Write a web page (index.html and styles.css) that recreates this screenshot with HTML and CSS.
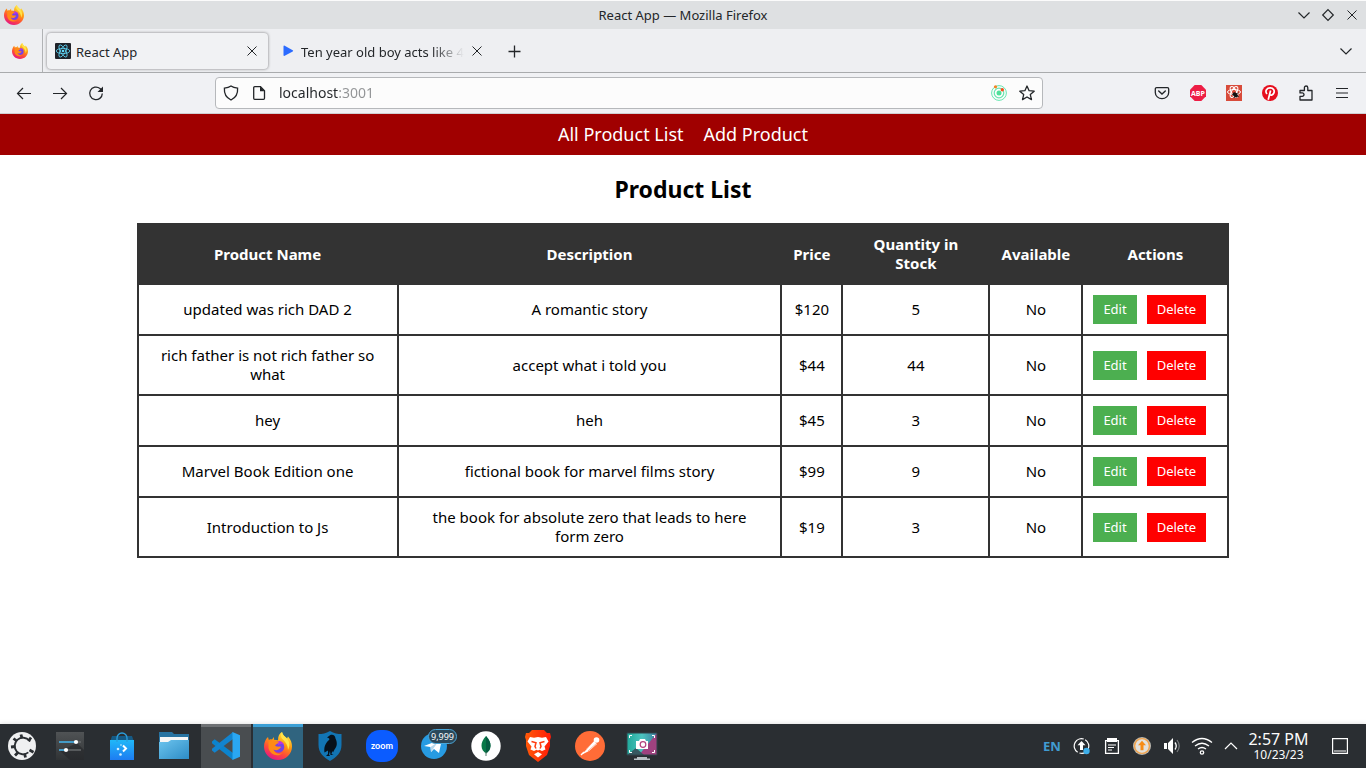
FILE: index.html
```html
<!DOCTYPE html>
<html lang="en">
<head>
<meta charset="utf-8">
<title>React App</title>
<link rel="stylesheet" href="styles.css">
</head>
<body>
<svg class="defs" aria-hidden="true">
  <defs>
    <linearGradient id="fox" x1="0.8" y1="0" x2="0.3" y2="1"><stop offset="0" stop-color="#fff44f"/><stop offset="0.4" stop-color="#ff980e"/><stop offset="0.7" stop-color="#ff4a3a"/><stop offset="1" stop-color="#e31587"/></linearGradient>
    <linearGradient id="bag" x1="0" y1="0" x2="0" y2="1"><stop offset="0" stop-color="#20b8f8"/><stop offset="1" stop-color="#1d7cf2"/></linearGradient>
    <linearGradient id="folder" x1="0" y1="0" x2="1" y2="1"><stop offset="0" stop-color="#6cc4ee"/><stop offset="1" stop-color="#2d8cc6"/></linearGradient>
    <linearGradient id="lion" x1="0" y1="0" x2="1" y2="0"><stop offset="0" stop-color="#ff5a08"/><stop offset="1" stop-color="#ff1b08"/></linearGradient>
    <linearGradient id="slate" x1="0" y1="0" x2="0" y2="1"><stop offset="0" stop-color="#505355"/><stop offset="1" stop-color="#303335"/></linearGradient>
    <linearGradient id="screen" x1="0" y1="0" x2="1" y2="0"><stop offset="0" stop-color="#20a99a"/><stop offset="0.5" stop-color="#4cc4c0"/><stop offset="1" stop-color="#3b7d9e"/></linearGradient>
    <symbol id="firefox" viewBox="0 0 28 28">
      <path fill="url(#fox)" d="M14 28C6 28 0 22 0 14.500C0 11 1.500 7 4 5l.8 3c1-.8 2-.8 3.200-.5L10 5v2.800l4 .4C14 4 15.500 1.500 18 0c.5 3 3 4.500 5 6.500l1-2C27 8 28 11 28 14.500C28 22 22 28 14 28z"/>
      <circle cx="14.500" cy="15" r="5.800" fill="#7542e5"/>
      <path fill="#b833e1" d="M12 9.500c4-1.500 7 .5 8 3-2-1-4-.5-5.500.5z"/>
      <path fill="#ff8a16" d="M4.500 9.500C8 7.500 11 9 15 9.500c-.5 2-3 2.500-4 4 2 2 4.500.5 6 1.500-1.500 3-5 4-7.500 2.500 1 4 6 5 9 3.500-5 5-13 1-14-5z"/>
      <path fill="#ffe34a" d="M18 0c.5 3 3 4.500 5 6.500C26 10 26 14 24 18c0-4-2-8-5-10.500-2.500-2-2.500-5-1-7.500z"/>
    </symbol>
    <symbol id="close" viewBox="0 0 16 16"><path d="M3.500 3.500l9 9M12.500 3.500l-9 9" fill="none" stroke="currentColor" stroke-width="1"/></symbol>
    <symbol id="chevron" viewBox="0 0 16 16"><path d="M2.500 5.500L8 11l5.500-5.500" fill="none" stroke="currentColor" stroke-width="1.200"/></symbol>
  </defs>
</svg>

<div class="desktop">
  <header class="titlebar">
    <svg class="i20"><use href="#firefox"/></svg>
    <span class="window-title">React App — Mozilla Firefox</span>
    <div class="window-buttons">
      <button aria-label="Minimize"><svg class="i16"><use href="#chevron"/></svg></button>
      <button aria-label="Maximize"><svg class="i16" viewBox="0 0 16 16"><path d="M8 2.700L13.300 8 8 13.300 2.700 8z" fill="none" stroke="currentColor" stroke-width="1.200"/></svg></button>
      <button aria-label="Close window"><svg class="i16"><use href="#close"/></svg></button>
    </div>
  </header>

  <div class="tabstrip">
    <button class="pinned" aria-label="Firefox View"><svg class="i16"><use href="#firefox"/></svg></button>
    <div class="tab active">
      <svg class="i16" viewBox="0 0 16 16"><rect width="16" height="16" rx="1" fill="#20232a"/><g fill="none" stroke="#61dafb" stroke-width=".8"><ellipse cx="8" cy="8" rx="6.800" ry="2.600"/><ellipse cx="8" cy="8" rx="6.800" ry="2.600" transform="rotate(60 8 8)"/><ellipse cx="8" cy="8" rx="6.800" ry="2.600" transform="rotate(120 8 8)"/></g><circle cx="8" cy="8" r="1.300" fill="#61dafb"/></svg>
      <span class="tab-title">React App</span>
      <button aria-label="Close tab"><svg class="i16"><use href="#close"/></svg></button>
    </div>
    <div class="tab second">
      <svg class="i16" viewBox="0 0 16 16"><path d="M3.500 3.500q0-1.200 1.200-.8l8 4.500q1 .6 0 1.200l-8 4.400q-1.200.4-1.200-.8z" fill="#2b6bff"/></svg>
      <span class="tab-title fade">Ten year old boy acts like 4</span>
      <button aria-label="Close tab"><svg class="i16"><use href="#close"/></svg></button>
    </div>
    <button class="newtab" aria-label="New tab"><svg class="i16" viewBox="0 0 16 16"><path d="M8.500 2.500v12M2.500 8.500h12" stroke="currentColor" stroke-width="1.300"/></svg></button>
    <button class="alltabs" aria-label="List all tabs"><svg class="i16"><use href="#chevron"/></svg></button>
  </div>

  <div class="toolbar">
    <button aria-label="Back"><svg class="i16" viewBox="0 0 16 16"><path d="M15 8.500H1.500M7 3L1.500 8.500 7 14" fill="none" stroke="currentColor" stroke-width="1.200"/></svg></button>
    <button aria-label="Forward"><svg class="i16" viewBox="0 0 16 16"><path d="M1 8.500h13.500M9 3l5.500 5.500L9 14" fill="none" stroke="currentColor" stroke-width="1.200"/></svg></button>
    <button aria-label="Reload"><svg class="i16" viewBox="0 0 16 16"><path d="M14.300 8.500A6.300 6.300 0 1 1 12 3.500l1.500 1.500" fill="none" stroke="currentColor" stroke-width="1.300"/><path d="M15 1.500v5.500H9.500z" fill="currentColor"/></svg></button>
    <div class="urlbar">
      <svg class="i16" viewBox="0 0 16 16"><path d="M8 1C6 2.500 3.500 3 1.400 3.200 1 8.500 3 12.500 8 15c5-2.500 7-6.500 6.600-11.800C12.500 3 10 2.500 8 1z" fill="none" stroke="currentColor" stroke-width="1.300"/></svg>
      <svg class="i16" viewBox="0 0 16 16"><path d="M3.700 1.700h5.800l4 4v7.600a1 1 0 0 1-1 1H3.700a1 1 0 0 1-1-1V2.700a1 1 0 0 1 1-1z" fill="none" stroke="currentColor" stroke-width="1.300"/><path d="M9 1.500v4.700h4.700z" fill="currentColor"/></svg>
      <input type="text" aria-label="Address" value="localhost:3001">
      <svg class="i16" viewBox="0 0 16 16"><g fill="none" stroke="#66e6b0"><circle cx="8" cy="8" r="7.400" stroke-width="1"/><circle cx="8" cy="8" r="4.800" stroke-width="1.200"/></g><circle cx="8" cy="8" r="2.500" fill="#4fe09a"/><circle cx="4.500" cy="1.800" r="1.600" fill="#f58220"/><circle cx="11.300" cy="4.800" r="1.700" fill="#f4511e"/></svg>
      <svg class="i16" viewBox="0 0 16 16"><path d="M8 1l2.100 4.700 5.100.5-3.900 3.400 1.200 5L8 12l-4.500 2.600 1.200-5L.8 6.200l5.100-.5z" fill="none" stroke="currentColor" stroke-width="1.300" stroke-linejoin="round"/></svg>
    </div>
    <button aria-label="Save to Pocket"><svg class="i16" viewBox="0 0 16 16"><path d="M2.600 2.600h10.800a1.300 1.300 0 0 1 1.300 1.300V7.500a6.700 6.200 0 0 1-13.400 0V3.900a1.300 1.300 0 0 1 1.300-1.300z" fill="none" stroke="currentColor" stroke-width="1.300"/><path d="M4.700 6L8 9l3.300-3" fill="none" stroke="currentColor" stroke-width="1.400" stroke-linecap="round"/></svg></button>
    <button aria-label="Adblock Plus"><svg class="i16" viewBox="0 0 16 16"><path d="M4.700 0h6.600L16 4.700v6.600L11.300 16H4.700L0 11.300V4.700z" fill="#ed1e45"/><text x="8" y="11" text-anchor="middle" class="abp">ABP</text></svg></button>
    <button aria-label="React bug tools"><svg class="i16" viewBox="0 0 16 16"><rect width="16" height="16" fill="#d84b3a"/><g fill="none" stroke="#fff" stroke-width="1"><ellipse cx="8" cy="7" rx="6.500" ry="2.500"/><ellipse cx="8" cy="7" rx="6" ry="2.500" transform="rotate(60 8 7)"/><ellipse cx="8" cy="7" rx="6" ry="2.500" transform="rotate(120 8 7)"/></g><ellipse cx="9.300" cy="9.800" rx="3" ry="1.900" fill="#111" transform="rotate(45 9.300 9.800)"/><path d="M6 9.500l3 .5M8 13l1.500-3M12.500 8L9 9M13 11.500L9 10" stroke="#111" stroke-width=".8"/></svg></button>
    <button aria-label="Pinterest"><svg class="i16" viewBox="0 0 16 16"><circle cx="8" cy="8" r="8" fill="#e60f1e"/><path d="M5 9C2.500 6 5 2.800 8.300 2.900c3 .1 4.600 2.400 3.600 5-1 2.600-3.500 2.700-4.300 1.500M8.600 5.500L6.200 14.800" fill="none" stroke="#fff" stroke-width="1.700"/></svg></button>
    <button aria-label="Extensions"><svg class="i16" viewBox="0 0 16 16"><path d="M2 15v-3.700h2.300a1.700 1.700 0 0 0 0-3.400H2V5.500h4.400V2.700a1.700 1.700 0 0 1 3.400 0v2.800H14V15z" fill="none" stroke="currentColor" stroke-width="1.300" stroke-linejoin="round"/></svg></button>
    <button aria-label="Open application menu"><svg class="i16" viewBox="0 0 16 16"><path d="M2 3.500h12M2 8h12M2 12.500h12" stroke="currentColor" stroke-width="1.200"/></svg></button>
  </div>

  <main class="page">
    <nav class="site-nav">
      <a href="#list">All Product List</a>
      <a href="#add">Add Product</a>
    </nav>
    <h2 class="page-title">Product List</h2>
    <table class="products" id="list">
      <colgroup><col class="c-name"><col><col class="c-price"><col class="c-qty"><col class="c-avail"><col class="c-act"></colgroup>
      <thead>
        <tr><th>Product Name</th><th>Description</th><th>Price</th><th>Quantity in Stock</th><th>Available</th><th>Actions</th></tr>
      </thead>
      <tbody>
        <tr><td>updated was rich DAD 2</td><td>A romantic story</td><td>$120</td><td>5</td><td>No</td><td><div class="actions"><button class="edit">Edit</button><button class="delete">Delete</button></div></td></tr>
        <tr><td>rich father is not rich father so what</td><td>accept what i told you</td><td>$44</td><td>44</td><td>No</td><td><div class="actions"><button class="edit">Edit</button><button class="delete">Delete</button></div></td></tr>
        <tr><td>hey</td><td>heh</td><td>$45</td><td>3</td><td>No</td><td><div class="actions"><button class="edit">Edit</button><button class="delete">Delete</button></div></td></tr>
        <tr><td>Marvel Book Edition one</td><td>fictional book for marvel films story</td><td>$99</td><td>9</td><td>No</td><td><div class="actions"><button class="edit">Edit</button><button class="delete">Delete</button></div></td></tr>
        <tr><td>Introduction to Js</td><td>the book for absolute zero that leads to here form&nbsp;zero</td><td>$19</td><td>3</td><td>No</td><td><div class="actions"><button class="edit">Edit</button><button class="delete">Delete</button></div></td></tr>
      </tbody>
    </table>
  </main>

  <footer class="taskbar">
    <button class="launcher" aria-label="Application launcher"><svg class="i28" viewBox="0 0 28 28"><circle cx="14" cy="14" r="14" fill="#eff0f1"/><circle cx="15" cy="14" r="8.300" fill="none" stroke="#2a2e32" stroke-width="1.800" stroke-dasharray="40 12.200" transform="rotate(50 15 14)"/><g stroke="#2a2e32" stroke-width="2.800"><path d="M14 6.500L13 2.500M8.800 9L5.500 6.500M7.500 14.500L3 15M10 20.500l-3 3M16.500 21.500l1 4M21.500 18l4 2.200M20.500 9l2.500-3.500"/></g></svg></button>
    <button aria-label="System settings"><svg class="i28" viewBox="0 0 28 28"><path d="M0 0h28v28H0z" fill="url(#slate)"/><path d="M21 11l7 7v10H14L4 19z" fill="#242729" opacity=".6"/><path d="M3 10h22M3 18h22" stroke="#66696b" stroke-width="1.500"/><path d="M3 10h16M3 18h6" stroke="#3daee9" stroke-width="1.500"/><circle cx="20" cy="10" r="2.100" fill="#fff"/><circle cx="10" cy="18" r="2.100" fill="#fff"/></svg></button>
    <button aria-label="Software center"><svg class="i28" viewBox="0 0 28 28"><path d="M4 4h20l2 6H2z" fill="#155a85"/><path d="M2 8h24v20H2z" fill="url(#bag)"/><path d="M9 10V6a5 5 0 0 1 10 0v4" fill="none" stroke="#2b9fdd" stroke-width="1.300"/><path d="M15 13.500l3 3-3 3" fill="none" stroke="#fff" stroke-width="2"/><g fill="#d5efff"><circle cx="10" cy="17" r="1.300"/><circle cx="12.500" cy="22.500" r="1.300"/><circle cx="13" cy="13" r=".8"/></g></svg></button>
    <button aria-label="Files"><svg class="i30" viewBox="0 0 30 30"><path d="M0 1h13l2 2h15v22H0z" fill="#2873a1"/><path d="M1 6h28v5H1z" fill="#f6f6f6"/><path d="M0 11h9l3-2h18v19H0z" fill="url(#folder)"/></svg></button>
    <button class="running" aria-label="Visual Studio Code"><svg class="i28" viewBox="0 0 28 28"><path d="M0 9.500L2.700 7.300 21 21v7L0 11.200z" fill="#0b83cd"/><path d="M0 18.500l2.700 2.200L21 7V0L0 16.800z" fill="#1284cf"/><path d="M20.500 0L28 3.300v21.400L20.500 28z" fill="#2aa7f2"/></svg></button>
    <button class="focused" aria-label="Firefox"><svg class="i28"><use href="#firefox"/></svg></button>
    <button aria-label="Raven shield"><svg class="i30" viewBox="0 0 30 30"><path d="M15 0c4 2.500 8 3 11.500 3v11c0 8-5 12-11.500 16C8.500 26 3.500 22 3.500 14V3C7 3 11 2.500 15 0z" fill="#1275b4"/><path d="M12 6.500l3-2.300c3-1.200 5.300.5 5.500 3.300 2 4 1.700 8-1 11l-1.500 3-.7-1.500-.8 3 2 1h-3l-.5-4-1 3.500 1 1.500h-4l2-2v-3.500l-3.500 2c-.7-5 .5-9 4.500-12.500 1-1 .5-1.700-2-2.500z" fill="#07111b"/></svg></button>
    <button aria-label="Zoom"><svg class="i32" viewBox="0 0 32 32"><rect width="32" height="32" rx="14" fill="#0b5cff"/><text x="16" y="19" text-anchor="middle" class="zoom">zoom</text></svg></button>
    <button aria-label="Telegram, 9,999 unread"><svg class="i28" viewBox="0 0 28 28"><circle cx="14" cy="14" r="13" fill="#279be2"/><path d="M4 14l18-7-3 14-5-4-3 3-.5-5z" fill="#fff"/><path d="M10.500 15L18 10l-5 7-2 3z" fill="#b7d9ee"/></svg><span class="badge">9,999</span></button>
    <button aria-label="MongoDB Compass"><svg class="i30" viewBox="0 0 30 30"><circle cx="15" cy="15" r="14.700" fill="#fff"/><path d="M15 5c3 3.500 4.700 6.500 4.500 10-.2 3.500-2 5.800-4.500 7.500-2.500-1.700-4.300-4-4.500-7.500C10.300 11.500 12 8.500 15 5z" fill="#087848"/><path d="M15 5v17.500c2.500-1.700 4.300-4 4.500-7.500C19.700 11.500 18 8.500 15 5z" fill="#065c41"/><path d="M15 21v4" stroke="#567c6d"/></svg></button>
    <button aria-label="Brave"><svg class="i32" viewBox="0 0 32 32"><path d="M10 0h12l3 3 3 0 1 4-1 3 0 6-3 9-9 7-9-7-3-9V10L3 7l1-4h3z" fill="url(#lion)"/><path d="M8 7l4 .8L16 7l4 .8L24 7l2.500 4.500-4 5 1 3-3.500 1.500-2.500-1.300L16 20.500l-1.500-.8L12 21l-3.500-1.500 1-3-4-5z" fill="#fff"/><path d="M9.500 11.500l4.500 1.300-1 3.700 1 2M22.500 11.500L18 12.800l1 3.700-1 2" fill="none" stroke="#ff3c10" stroke-width="1.500"/><path d="M16 22l4 2.300-4 3.200-4-3.200z" fill="#fff"/></svg></button>
    <button aria-label="Postman"><svg class="i30" viewBox="0 0 30 30"><circle cx="15" cy="15" r="15" fill="#ff6c37"/><path d="M8 22l3-3 8-9 3 3-8 7-6 3z" fill="#fff"/><path d="M11 18l8-8M13 20l9-8" stroke="#ff9470" stroke-width=".7"/><circle cx="21.500" cy="9" r="2.800" fill="#fff"/><path d="M6 24l3-3" stroke="#fff" stroke-width="1.500"/></svg></button>
    <button aria-label="Screenshot tool"><svg class="i32" viewBox="0 0 32 32"><path d="M1 3h30v22H1z" fill="url(#screen)"/><path d="M31 3L13 25h18z" fill="#9f427f"/><path d="M1 25l9-7 8 7z" fill="#375860"/><path d="M1 3h30v22H1z" fill="none" stroke="#31424b"/><path d="M3.500 8V5.500H6M26 5.500h2.500V8M3.500 20v2.500H6M26 22.500h2.500V20" fill="none" stroke="#fff"/><path d="M10 11h3l1-2h5l1 2h2v8H10z" fill="#fff"/><circle cx="17" cy="14.500" r="2.800" fill="#fff" stroke="#b2427d" stroke-width="1.200"/><path d="M11 27h10v1.500h3V30H8v-1.500h3z" fill="#b9c1c5"/></svg></button>

    <div class="tray">
      <button class="lang">EN</button>
      <button aria-label="Updates"><svg class="i18" viewBox="0 0 18 18"><circle cx="8.500" cy="9" r="7.300" fill="none" stroke="#fff" stroke-width="1.200" stroke-dasharray="21 2" transform="rotate(-60 8.500 9)"/><path d="M8.500 4l4 4.300H10V13H7V8.300H4.500z" fill="#fff"/><circle cx="13.500" cy="14" r="3.200" fill="#3daee9"/></svg></button>
      <button aria-label="Clipboard"><svg class="i18" viewBox="0 0 18 18"><path d="M2.600 3.600h12.800v12.800H2.600z" fill="none" stroke="#fff" stroke-width="1.300"/><path d="M4 1h10v4H4z" fill="#fff"/><path d="M5 8h8M5 10.500h6M5 13h4" stroke="#fff" stroke-width="1.200"/></svg></button>
      <button aria-label="Package updater"><svg class="i18" viewBox="0 0 18 18"><circle cx="9" cy="9" r="9" fill="#bbb8b1"/><circle cx="9" cy="9" r="7.400" fill="#e3e1dc" stroke="#f3a44b" stroke-width="1.400"/><path d="M9 3.800l4 4.500h-2.500v5h-3v-5H5z" fill="#f78c16"/></svg></button>
      <button aria-label="Volume"><svg class="i18" viewBox="0 0 18 18"><path d="M1 6h3v6H1zM5 6l5-5v16l-5-5z" fill="#fff"/><path d="M12 5.500q2.500 3.500 0 7" fill="none" stroke="#fff" stroke-width="1.300"/><path d="M14 3q4.500 6 0 12" fill="none" stroke="#787b7e" stroke-width="1.200"/></svg></button>
      <button aria-label="Network"><svg class="i22" viewBox="0 0 22 22"><path d="M1 7.500q10-8 20 0M4 11q7-5.500 14 0M7 14q4-3 8 0" fill="none" stroke="#fff" stroke-width="1.300"/><circle cx="11" cy="17.500" r="1.700" fill="none" stroke="#fff" stroke-width="1.300"/></svg></button>
      <button class="more" aria-label="Show hidden icons"><svg class="i16" viewBox="0 0 16 16"><path d="M2 11l6-6 6 6" fill="none" stroke="#fff" stroke-width="1.200"/></svg></button>
      <button class="clock"><span class="time">2:57 PM</span><span class="date">10/23/23</span></button>
      <button class="peek" aria-label="Show desktop"><svg class="i16" viewBox="0 0 16 16"><path d="M.6.6h14.800v14.800H.6zM2 13h12" fill="none" stroke="#fff" stroke-width="1.200"/></svg></button>
    </div>
  </footer>
</div>
</body>
</html>
```
FILE: styles.css
```css
* { box-sizing: border-box; }
body {
  margin: 0;
  font-family: "Noto Sans", sans-serif;
  font-size: 13px;
  color: #232629;
  background: #fff;
}
button {
  display: flex;
  align-items: center;
  justify-content: center;
  margin: 0;
  padding: 0;
  border: 0;
  background: none;
  color: inherit;
  font: inherit;
}
svg { flex: none; display: block; }
.defs { position: absolute; width: 0; height: 0; }
.i16 { width: 16px; height: 16px; }
.i18 { width: 18px; height: 18px; }
.i20 { width: 20px; height: 20px; }
.i22 { width: 22px; height: 22px; }
.i28 { width: 28px; height: 28px; }
.i30 { width: 30px; height: 30px; }
.i32 { width: 32px; height: 32px; }

.desktop {
  display: flex;
  flex-direction: column;
  min-height: 100vh;
}

/* Window title bar */
.titlebar {
  display: grid;
  grid-template-columns: 1fr auto 1fr;
  align-items: center;
  height: 29px;
  padding: 0 4px;
  border-top: 1px solid #fbfbfb;
  background: #dee0e2;
}
.window-buttons { display: flex; justify-content: flex-end; gap: 8px; padding-right: 2px; }

/* Tabs */
.tabstrip {
  display: flex;
  align-items: center;
  height: 44px;
  border-bottom: 1px solid #a9abad;
  background: #eeeff2;
}
.pinned {
  width: 43px;
  height: 43px;
  padding-right: 3px;
  border-right: 1px solid #b1b3b5;
}
.tab {
  display: flex;
  align-items: center;
  height: 36px;
  padding: 0 8px;
  gap: 5px;
}
.tab.active {
  width: 221px;
  margin-left: 4px;
  border-radius: 4px;
  background: #f1f2f4;
  box-shadow: 0 0 3px rgba(0, 0, 0, .5);
}
.tab.second {
  width: 225px;
  padding-left: 12px;
  margin-right: 13px;
}
.tab-title {
  flex: 1;
  white-space: nowrap;
  line-height: 20px;
  padding-top: 2px;
}
.fade {
  -webkit-mask-image: linear-gradient(to left, transparent, #000 32px);
  mask-image: linear-gradient(to left, transparent, #000 32px);
}
.alltabs { margin-left: auto; margin-right: 12px; }

/* Navigation toolbar */
.toolbar {
  display: flex;
  align-items: center;
  height: 41px;
  padding: 0 6px;
  border-bottom: 1px solid #cfcfd2;
  background: #f0f1f4;
}
.toolbar button { width: 36px; height: 36px; }
.urlbar {
  flex: 1;
  display: flex;
  align-items: center;
  gap: 12px;
  height: 32px;
  margin: 0 101px;
  padding: 0 7px;
  border: 1px solid #b6b8bb;
  border-radius: 4px;
  background: #fcfcfc;
}
.urlbar input {
  flex: 1;
  min-width: 0;
  padding: 0;
  border: 0;
  outline: 0;
  font: 14px/20px "Noto Sans", sans-serif;
  color: transparent;
  background: linear-gradient(to right, #232629 60px, #919395 60px);
  -webkit-background-clip: text;
  background-clip: text;
}
.abp { font: bold 7px "Open Sans", sans-serif; fill: #fff; }

/* Web page */
.page {
  flex: 1;
  color: #000;
  background: #fff;
}
.site-nav {
  display: flex;
  justify-content: center;
  gap: 20px;
  padding: 8px 10px;
  background: #a00000;
}
.site-nav a {
  color: #fff;
  font-size: 18px;
  line-height: 25px;
  text-decoration: none;
}
.page-title {
  margin: 20px 0;
  font-size: 23px;
  line-height: 28px;
  text-align: center;
}
.products {
  width: 80%;
  margin: 0 auto;
  border-collapse: collapse;
  table-layout: fixed;
  font-size: 15px;
  line-height: 19px;
  text-align: center;
}
.products th,
.products td { padding: 10px; border: 2px solid #333; }
.products th { color: #fff; background: #333; }
.c-name { width: 260px; }
.c-price { width: 61px; }
.c-qty { width: 147px; }
.c-avail { width: 93px; }
.c-act { width: 146px; }
.actions { display: flex; gap: 10px; }
.actions button {
  padding: 5px 10px;
  color: #fff;
  font-size: 13px;
  line-height: 19px;
}
.actions .edit { background: #4caf50; }
.actions .delete { background: #f00; }

/* Desktop panel */
.taskbar {
  display: flex;
  align-items: stretch;
  gap: 2px;
  height: 44px;
  background: #2a2e32;
  color: #fcfcfc;
  box-shadow: 0 0 5px rgba(0, 0, 0, .15);
}
.taskbar > button { position: relative; width: 50px; }
.taskbar > .launcher { width: 43px; }
.taskbar > .running { background: #494d50; box-shadow: inset 0 3px #6e7174; }
.taskbar > .focused { background: #30647f; box-shadow: inset 0 3px #3b9fd5; }
.zoom { font: bold 9px Lato, sans-serif; fill: #fff; }
.badge {
  position: absolute;
  top: 5px;
  right: 2px;
  padding: 0 2px;
  border: 1px solid #4aa5d6;
  border-radius: 8px;
  background: #2b485a;
  font-size: 9px;
  line-height: 13px;
}
.tray { display: flex; margin-left: auto; }
.tray button { width: 30px; }
.tray .lang { color: #419bd0; font: bold 13px/20px "Noto Sans", sans-serif; }
.tray .more { width: 27px; }
.tray .clock {
  flex-direction: column;
  width: 69px;
}
.time { font-size: 16px; line-height: 18px; }
.date { font-size: 12px; line-height: 14px; }
.tray .peek { width: 53px; }
```
